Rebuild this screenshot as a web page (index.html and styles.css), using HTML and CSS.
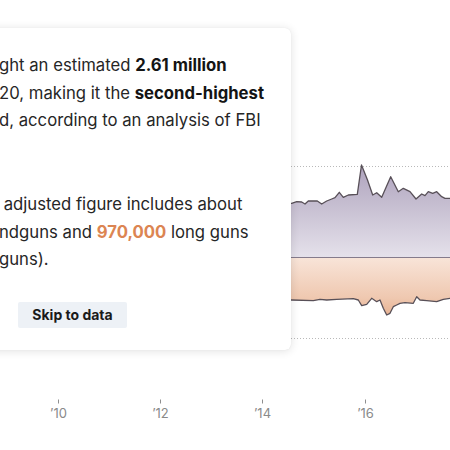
FILE: index.html
```html
<!DOCTYPE html>
<html lang="en">
<head>
<meta charset="utf-8">
<title>Gun sales</title>
<link rel="stylesheet" href="styles.css">
</head>
<body>
<div class="page">
  <svg class="chart" width="450" height="450" viewBox="0 0 450 450" xmlns="http://www.w3.org/2000/svg">
    <defs>
      <linearGradient id="gPurple" gradientUnits="userSpaceOnUse" x1="0" y1="165" x2="0" y2="257">
        <stop offset="0" stop-color="#aea2bd"/>
        <stop offset="0.4" stop-color="#c4bccf"/>
        <stop offset="1" stop-color="#e5e1eb"/>
      </linearGradient>
      <linearGradient id="gOrange" gradientUnits="userSpaceOnUse" x1="0" y1="258" x2="0" y2="315">
        <stop offset="0" stop-color="#f8e4d8"/>
        <stop offset="0.7" stop-color="#efc8b0"/>
        <stop offset="1" stop-color="#e8b393"/>
      </linearGradient>
    </defs>
    <line class="grid" x1="0" y1="166.5" x2="450" y2="166.5"/>
    <line class="grid" x1="0" y1="338.5" x2="450" y2="338.5"/>
    <path fill="url(#gPurple)" d="M0,202 L291.7,203.3 L296.7,201.7 L301.7,202 L305,204 L308.3,201 L317.3,201 L321.7,204 L326.7,201 L331.7,199 L335,197.7 L339.3,192.3 L343.3,197.3 L348.3,195 L357.3,194.3 L361.5,165 L367.5,180 L372.7,195 L376.7,192.7 L381.7,197.3 L390.7,176.7 L398.3,191.7 L403.3,188.3 L410,191.7 L416,199 L421.7,194 L425,195.7 L428.3,191.7 L432.7,193.3 L436.7,191.7 L441.7,196.7 L445,198.3 L450,198.3 L450,257.5 L0,257.5 Z"/>
    <path fill="url(#gOrange)" d="M0,257.5 L450,257.5 L450,298.3 L443.3,299.3 L436.7,301.7 L426.7,300.7 L420,300 L416.7,296.7 L413.3,303.3 L405,302.7 L400,303.3 L396.7,305 L393.3,306.7 L390,313.3 L386.7,315 L383.3,308.3 L380,300 L376.7,301.7 L371.7,298.3 L366.7,304.3 L361.7,305.7 L358.3,300 L353.3,298.7 L336.7,299.3 L326.7,300 L320,299.3 L313.3,300.7 L291.7,300 L0,300 Z"/>
    <path class="line" d="M0,202 L291.7,203.3 L296.7,201.7 L301.7,202 L305,204 L308.3,201 L317.3,201 L321.7,204 L326.7,201 L331.7,199 L335,197.7 L339.3,192.3 L343.3,197.3 L348.3,195 L357.3,194.3 L361.5,165 L367.5,180 L372.7,195 L376.7,192.7 L381.7,197.3 L390.7,176.7 L398.3,191.7 L403.3,188.3 L410,191.7 L416,199 L421.7,194 L425,195.7 L428.3,191.7 L432.7,193.3 L436.7,191.7 L441.7,196.7 L445,198.3 L450,198.3"/>
    <path class="line" d="M0,300 L291.7,300 L313.3,300.7 L320,299.3 L326.7,300 L336.7,299.3 L353.3,298.7 L358.3,300 L361.7,305.7 L366.7,304.3 L371.7,298.3 L376.7,301.7 L380,300 L383.3,308.3 L386.7,315 L390,313.3 L393.3,306.7 L396.7,305 L400,303.3 L405,302.7 L413.3,303.3 L416.7,296.7 L420,300 L426.7,300.7 L436.7,301.7 L443.3,299.3 L450,298.3"/>
    <line class="zero" x1="0" y1="257.5" x2="450" y2="257.5"/>
    <g class="axis">
      <line class="tick" x1="58.5" y1="399.5" x2="58.5" y2="403.5"/>
      <line class="tick" x1="160.5" y1="399.5" x2="160.5" y2="403.5"/>
      <line class="tick" x1="262.5" y1="399.5" x2="262.5" y2="403.5"/>
      <line class="tick" x1="365.5" y1="399.5" x2="365.5" y2="403.5"/>
      <text x="58.5" y="417.5">’10</text>
      <text x="160.5" y="417.5">’12</text>
      <text x="262.5" y="417.5">’14</text>
      <text x="365.5" y="417.5">’16</text>
    </g>
  </svg>

  <div class="card">
    <p class="copy"><span class="hid">Americans bou</span>ght an estimated <b>2.61 million</b><br><span class="hid">guns in March 20</span>20, making it the <b>second-highest</b><br><span class="hid">month on recor</span>d, according to an analysis of FBI<br><span class="hid">data.</span></p>
    <p class="copy"><span class="hid">The</span> adjusted figure includes about<br><span class="hid"><b class="purple">1.64 million</b> ha</span>ndguns and <b class="orange">970,000</b> long guns<br><span class="hid">(rifles and shot</span>guns).</p>
    <div class="actions">
      <button class="skip" type="button">Skip to data</button>
    </div>
  </div>
</div>
</body>
</html>
```

FILE: styles.css
```css
html, body {
  margin: 0;
  padding: 0;
  background: #ffffff;
}

.page {
  position: relative;
  width: 450px;
  height: 450px;
  overflow: hidden;
  font-family: Inter, "Liberation Sans", sans-serif;
}

.chart {
  display: block;
}

.grid {
  stroke: #b9b9b9;
  stroke-width: 1;
  stroke-dasharray: 1 2;
}

.zero {
  stroke: #857b8c;
  stroke-width: 1;
}

.line {
  fill: none;
  stroke: #585058;
  stroke-width: 1.3;
  stroke-linejoin: round;
}

.tick {
  stroke: #8f8f8f;
  stroke-width: 1;
}

.axis text {
  font-family: Inter, "Liberation Sans", sans-serif;
  font-size: 13px;
  fill: #8a8a8a;
  text-anchor: middle;
}

.card {
  position: absolute;
  top: 28px;
  left: -146px;
  width: 437px;
  box-sizing: border-box;
  padding: 24px 24px 22px;
  background: #ffffff;
  border-radius: 6px;
  box-shadow: 0 1px 10px rgba(0, 0, 0, 0.12), 0 0 1px rgba(0, 0, 0, 0.1);
}

.copy {
  margin: 0;
  font-size: 16.7px;
  line-height: 27.5px;
  color: #262626;
  white-space: nowrap;
}

.copy + .copy {
  margin-top: 29px;
}

.copy b {
  font-weight: 700;
  color: #141414;
}

.copy .orange {
  color: #dc8552;
}

.copy .purple {
  color: #8a7ca0;
}

.hid {
  display: inline-flex;
  justify-content: flex-end;
  width: 121px;
}

.actions {
  display: flex;
  justify-content: center;
  margin-top: 28.5px;
}

.skip {
  border: none;
  border-radius: 2px;
  background: #edf1f6;
  color: #1a1a1a;
  font-family: Inter, "Liberation Sans", sans-serif;
  font-size: 14px;
  font-weight: 700;
  line-height: 18px;
  padding: 4px 14px;
  cursor: pointer;
}
```
